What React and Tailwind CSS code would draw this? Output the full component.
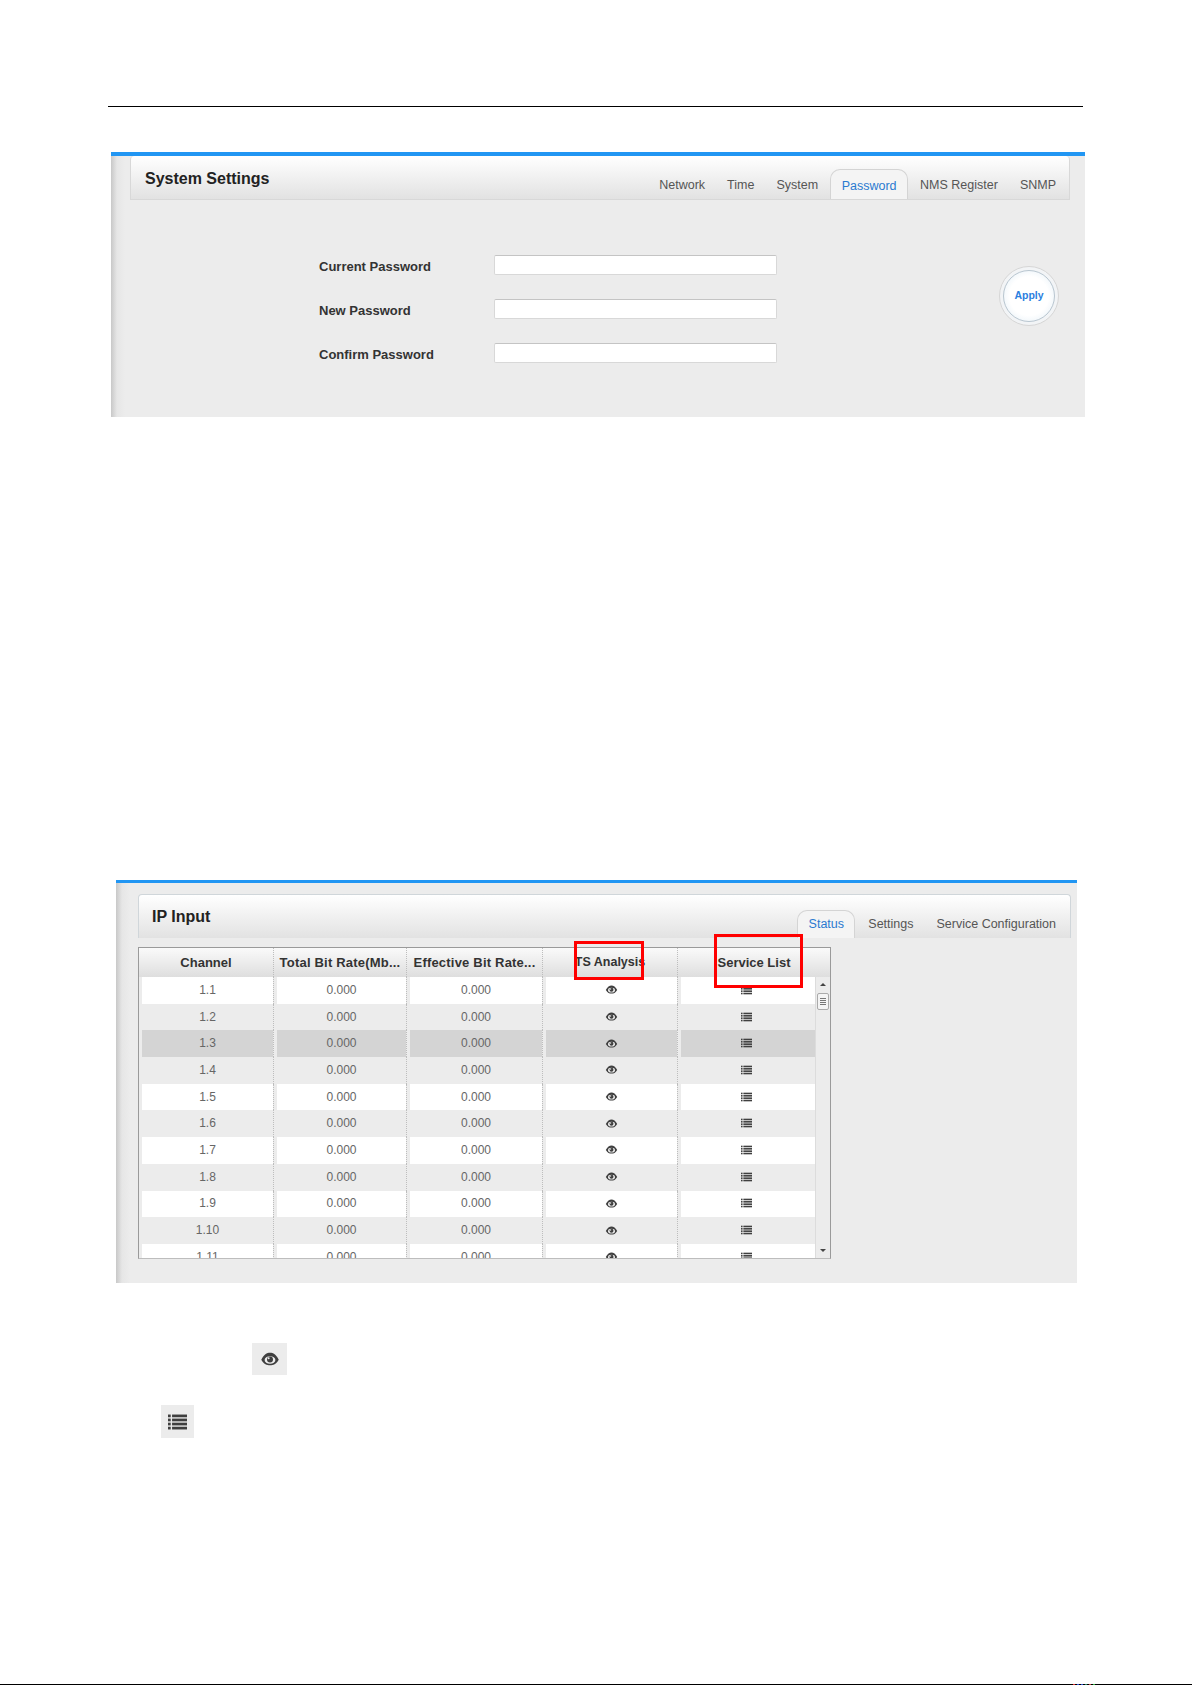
import React from "react";

const font = "font-['Liberation_Sans',Arial,sans-serif]";

const settingTabs = [
  { name: "Network", pad: "pl-[12px] pr-[11px]" },
  { name: "Time", pad: "px-[11px]" },
  { name: "System", pad: "pl-[11px] pr-[12px]" },
  { name: "Password", active: true },
  { name: "NMS Register", pad: "pl-[12px] pr-[11px]" },
  { name: "SNMP", pad: "pl-[11px] pr-[12px]" },
];
const inputTabs = ["Status", "Settings", "Service Configuration"];
const passwordFields = ["Current Password", "New Password", "Confirm Password"];
const channels = ["1.1", "1.2", "1.3", "1.4", "1.5", "1.6", "1.7", "1.8", "1.9", "1.10", "1.11"];

function EyeIcon({ className }) {
  return (
    <svg viewBox="0 0 16 12" className={className} fill="none">
      <path
        d="M1 6.5C3 2.5 5.5 1 8 1s5 1.5 7 5.5C13 10 10.500 11 8 11S3 10 1 6.5Z"
        fill="#3f3f3f"
      />
      <ellipse cx="8" cy="6.800" rx="4.300" ry="3" fill="#ececec" />
      <circle cx="8" cy="6.300" r="2.400" fill="#3f3f3f" />
      <circle cx="6.900" cy="5.400" r="0.800" fill="#ececec" />
    </svg>
  );
}

function ListIcon({ className }) {
  return (
    <svg viewBox="0 0 14 12" className={className} fill="#3f3f3f">
      <rect x="0" y="0.500" width="2" height="2" />
      <rect x="3" y="0.500" width="11" height="2" />
      <rect x="0" y="3.500" width="2" height="2" />
      <rect x="3" y="3.500" width="11" height="2" />
      <rect x="0" y="6.500" width="2" height="2" />
      <rect x="3" y="6.500" width="11" height="2" />
      <rect x="0" y="9.500" width="2" height="2" />
      <rect x="3" y="9.500" width="11" height="2" />
    </svg>
  );
}

function Cell({ width, bg, children, last }) {
  return (
    <div
      className={`${width} h-full flex items-center justify-center pl-[3px] ${
        last ? "" : "border-r border-dotted border-[#bdbdbd]"
      }`}
    >
      <div className={`h-full w-full flex items-center justify-center pb-px ${bg}`}>{children}</div>
    </div>
  );
}

function ChannelRow({ name, index }) {
  let bg = index % 2 === 0 ? "bg-white" : "bg-[#ececec]";
  if (index === 2) bg = "bg-[#d4d4d4]";

  return (
    <div className="flex h-[26.7px] shrink-0 text-[12px] text-[#666]">
      <Cell width="w-[135px]" bg={bg}>{name}</Cell>
      <Cell width="w-[133px]" bg={bg}>0.000</Cell>
      <Cell width="w-[136px]" bg={bg}>0.000</Cell>
      <Cell width="w-[135px]" bg={bg}>
        <EyeIcon className="w-[13px] h-[11px]" />
      </Cell>
      <Cell width="w-[137px]" bg={bg} last>
        <ListIcon className="w-[11px] h-[10px] mr-[3px]" />
      </Cell>
    </div>
  );
}

function HeaderCell({ width, children, last }) {
  return (
    <div
      className={`${width} h-full flex items-center justify-center whitespace-nowrap ${
        last ? "" : "border-r border-dotted border-[#bdbdbd]"
      }`}
    >
      {children}
    </div>
  );
}

function Scrollbar() {
  return (
    <div className="w-[15px] border-l border-[#dcdcdc] bg-[#ececec] flex flex-col items-center">
      <div className="mt-[6px] w-0 h-0 border-x-[3px] border-x-transparent border-b-[3px] border-b-[#444]" />
      <div className="mt-[7px] w-[12px] h-[17px] rounded-[2px] border border-[#aaa] bg-[#f4f4f4] flex flex-col items-center justify-center gap-[1px]">
        <div className="w-[6px] h-px bg-[#777]" />
        <div className="w-[6px] h-px bg-[#777]" />
        <div className="w-[6px] h-px bg-[#777]" />
        <div className="w-[6px] h-px bg-[#777]" />
      </div>
      <div className="mt-auto mb-[6px] w-0 h-0 border-x-[3px] border-x-transparent border-t-[3px] border-t-[#444]" />
    </div>
  );
}

export default function App() {
  return (
    <div className={`${font} relative w-[1192px] h-[1685px] bg-white overflow-hidden flex flex-col`}>
      <div className="ml-[108px] mt-[106px] w-[975px] h-px bg-black shrink-0" />

      {/* system settings panel */}
      <div className="ml-[111px] mt-[45px] w-[974px] h-[265px] shrink-0 border-t-4 border-[#2196f3] bg-[linear-gradient(to_right,#c8c8c8,#e6e6e6_6px,#ececec_14px)] pl-[19px] pr-[15px]">
        <div className="h-[44px] flex justify-between border border-t-0 border-[#d8d8d8] rounded-t-[4px] bg-[linear-gradient(to_bottom,#ffffff,#e2e2e2)]">
          <div className="ml-[14px] mt-[11px] text-[16px] leading-[24px] font-bold text-[#222]">System Settings</div>
          <div className="flex items-end mr-px text-[12.5px] text-[#555]">
            {settingTabs.map((tab) =>
              tab.active ? (
                <div
                  key={tab.name}
                  className="h-[30px] w-[78px] pt-[3px] flex items-center justify-center border border-b-0 border-[#d4d4d4] rounded-t-[10px] bg-[#f4f4f4] text-[#2b7ad0]"
                >
                  {tab.name}
                </div>
              ) : (
                <div key={tab.name} className={`h-[30px] pt-[3px] flex items-center ${tab.pad}`}>
                  {tab.name}
                </div>
              )
            )}
          </div>
        </div>

        <div className="flex">
          <div className="ml-[189px] mt-[55px] flex flex-col gap-[24px]">
            {passwordFields.map((label) => (
              <div key={label} className="flex items-center h-[20px]">
                <div className="w-[175px] text-[13px] font-bold text-[#333] pt-[4px]">{label}</div>
                <div className="w-[283px] h-[20px] rounded-[2px] border border-[#d8d8d8] border-t-[#c4c4c4] bg-white" />
              </div>
            ))}
          </div>
          <div className="ml-[222px] mt-[66px] w-[60px] h-[60px] rounded-full border border-[#d6d6d6] bg-[#f2f4f6] flex items-center justify-center">
            <div className="w-[52px] h-[52px] rounded-full border border-[#b9c6d0] bg-[radial-gradient(circle,#ffffff_55%,#dfecf5)] flex items-center justify-center text-[10.5px] font-bold text-[#2b7fe0]">
              Apply
            </div>
          </div>
        </div>
      </div>

      {/* ip input panel */}
      <div className="ml-[116px] mt-[463px] w-[961px] h-[403px] shrink-0 border-t-[3px] border-[#2196f3] bg-[linear-gradient(to_right,#c8c8c8,#e6e6e6_6px,#ececec_14px)] pl-[22px] pr-[6px] pt-[11px]">
        <div className="h-[44px] flex justify-between border border-b-0 border-[#d0d6da] rounded-t-[4px] bg-[linear-gradient(to_bottom,#ffffff,#e2e2e2)]">
          <div className="ml-[13px] mt-[10px] text-[16px] leading-[24px] font-bold text-[#222]">IP Input</div>
          <div className="flex items-end mr-[4px] text-[12.5px] text-[#555]">
            {inputTabs.map((tab) =>
              tab === "Status" ? (
                <div
                  key={tab}
                  className="h-[28px] w-[58px] flex items-center justify-center border border-b-0 border-[#d4d4d4] rounded-t-[10px] bg-[#f4f4f4] text-[#2b7ad0]"
                >
                  {tab}
                </div>
              ) : (
                <div key={tab} className="h-[28px] pl-[13px] pr-[10px] flex items-center">
                  {tab}
                </div>
              )
            )}
          </div>
        </div>

        <div className="mt-[9px] w-[693px] h-[312px] border border-[#9a9a9a] border-b-[#bdbdbd] flex flex-col overflow-hidden">
          <div className="h-[29px] shrink-0 flex text-[13px] font-bold text-[#333] bg-[linear-gradient(to_bottom,#fafafa,#dedede)]">
            <HeaderCell width="w-[135px]">Channel</HeaderCell>
            <HeaderCell width="w-[133px]"><span className="tracking-[0.2px]">Total Bit Rate(Mb...</span></HeaderCell>
            <HeaderCell width="w-[136px]"><span className="tracking-[0.2px]">Effective Bit Rate...</span></HeaderCell>
            <HeaderCell width="w-[135px]"><span className="text-[12.5px]">TS Analysis</span></HeaderCell>
            <HeaderCell width="w-[152px]" last>Service List</HeaderCell>
          </div>
          <div className="flex flex-1 min-h-0">
            <div className="w-[676px] flex flex-col overflow-hidden">
              {channels.map((name, i) => (
                <ChannelRow key={name} name={name} index={i} />
              ))}
            </div>
            <Scrollbar />
          </div>
        </div>
      </div>

      <div className="ml-[252px] mt-[60px] w-[35px] h-[32px] shrink-0 bg-[#ececec] flex items-center justify-center">
        <EyeIcon className="w-[20px] h-[16px]" />
      </div>
      <div className="ml-[161px] mt-[30px] w-[33px] h-[33px] shrink-0 bg-[#ececec] flex items-center justify-center">
        <ListIcon className="w-[19px] h-[18px]" />
      </div>

      <div className="absolute left-0 bottom-0 w-full h-px bg-black" />
      {/* coloured specks on the bottom line */}
      <div className="absolute left-[1073px] bottom-0 h-px flex gap-[2px]">
        <div className="w-[2px] bg-[#e03030]" />
        <div className="w-[2px] bg-[#3050d0]" />
        <div className="w-[2px] bg-[#3050d0]" />
        <div className="w-[2px] bg-[#208060]" />
        <div className="w-[2px] bg-[#c04040]" />
        <div className="w-[2px] bg-[#30b040]" />
      </div>

      {/* red annotation boxes */}
      <div className="absolute left-[574px] top-[941px] w-[70px] h-[39px] border-[3px] border-[#ff0000]" />
      <div className="absolute left-[714px] top-[934px] w-[89px] h-[54px] border-[3px] border-[#ff0000]" />
    </div>
  );
}
